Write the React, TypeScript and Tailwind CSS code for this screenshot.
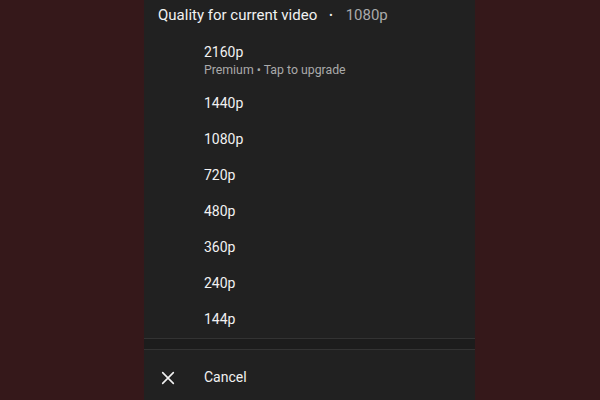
import React from 'react';

const qualities = ['1440p', '1080p', '720p', '480p', '360p', '240p', '144p'];

export default function App() {
  return (
    <div
      className="w-[600px] h-[400px] bg-[#35181a] flex pl-[144px] overflow-hidden"
      style={{ fontFamily: 'Roboto, "Noto Sans", sans-serif' }}
    >
      <div className="w-[331px] h-full bg-[#212121] flex flex-col text-[#f1f1f1]">
        {/* Header */}
        <div className="h-[30px] flex items-center pl-[14px] text-[15px]">
          <span>Quality for current video</span>
          <span className="ml-[12px] mr-[13px] text-[10px]">•</span>
          <span className="text-[#aaaaaa]">1080p</span>
        </div>

        {/* Premium option */}
        <div className="h-[55px] pl-[60px] pt-[13px] flex flex-col">
          <span className="h-[18px] leading-[18px] text-[14px]">2160p</span>
          <span className="h-[18px] leading-[18px] text-[12.3px] text-[#aaaaaa]">
            Premium • Tap to upgrade
          </span>
        </div>

        {/* Quality list */}
        {qualities.map((q) => (
          <div key={q} className="h-[36px] flex items-center pl-[60px] text-[14px]">
            {q}
          </div>
        ))}

        <div className="h-[12px] mt-px border-y border-[#333333] bg-[#1c1c1c]" />

        {/* Cancel */}
        <div className="flex-1 flex items-center pl-[16px] pt-[5px] text-[14px]">
          <svg width="16" height="16" viewBox="0 0 24 24" fill="none" stroke="#f1f1f1" strokeWidth="2.4" strokeLinecap="round">
            <path d="M4 4 L20 20 M20 4 L4 20" />
          </svg>
          <span className="ml-[28px]">Cancel</span>
        </div>
      </div>
    </div>
  );
}
